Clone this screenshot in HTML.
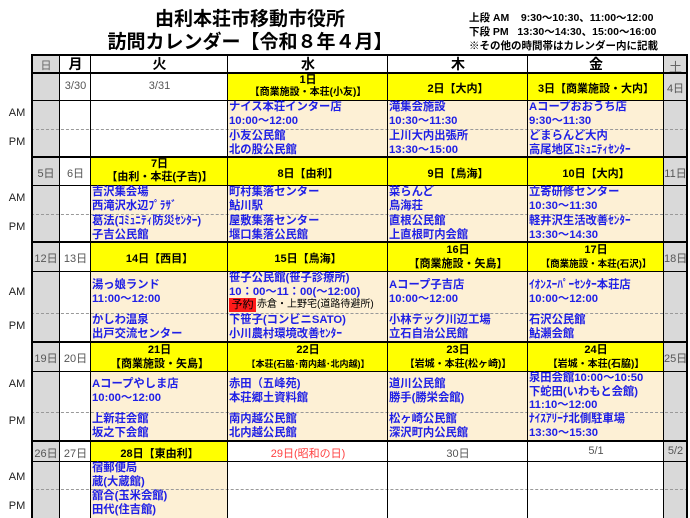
<!DOCTYPE html>
<html><head><meta charset="utf-8"><style>
*{margin:0;padding:0;box-sizing:border-box}
body{width:690px;height:518px;background:#fff;position:relative;overflow:hidden;font-family:"Liberation Sans","Noto Sans CJK JP",sans-serif}
div{position:absolute}
.g{background:#d9d9d9}.y{background:#ffff00}.p{background:#fdf0d5}.w{background:#fff}
.h{height:1px;background:#000}.H{height:2px;background:#000}
.d{height:0;border-top:1px dashed #999}
.v{width:1px;background:#000}.V{width:2px;background:#000}
.t{font-size:11.3px;font-weight:bold;color:#1f1fe6;line-height:13.5px;white-space:nowrap;padding-left:1px;margin-top:1px}
.c{text-align:center;white-space:nowrap;font-weight:bold;color:#000}
.n{font-size:11px;color:#555;text-align:center;white-space:nowrap}
.lab{font-size:11px;color:#222;left:6px;width:22px;text-align:center}
</style></head><body>
<div style="left:95px;top:8px;width:310px;text-align:center;font-size:19px;font-weight:bold;line-height:23px">由利本荘市移動市役所</div>
<div style="left:95px;top:31px;width:310px;text-align:center;font-size:19px;font-weight:bold;line-height:23px">訪問カレンダー【令和８年４月】</div>
<div style="left:469px;top:11px;font-size:10.5px;font-weight:bold;line-height:14px;white-space:pre">上段 AM    9:30～10:30、11:00～12:00
下段 PM   13:30～14:30、15:00～16:00
※その他の時間帯はカレンダー内に記載</div>

<div class="g" style="left:32px;top:55px;width:28px;height:18px"></div>
<div class="g" style="left:664px;top:55px;width:23px;height:18px"></div>
<div class="n" style="left:32px;top:57px;width:28px;color:#666">日</div>
<div class="c" style="left:60px;top:55px;width:31px;font-size:14px;line-height:18px">月</div>
<div class="c" style="left:91px;top:55px;width:137px;font-size:14px;line-height:18px">火</div>
<div class="c" style="left:228px;top:55px;width:160px;font-size:14px;line-height:18px">水</div>
<div class="c" style="left:388px;top:55px;width:140px;font-size:14px;line-height:18px">木</div>
<div class="c" style="left:528px;top:55px;width:136px;font-size:14px;line-height:18px">金</div>
<div class="n" style="left:664px;top:57px;width:23px;color:#666;font-size:13px">土</div>

<div class="g" style="left:32px;top:73px;width:28px;height:445px"></div>
<div class="g" style="left:664px;top:73px;width:23px;height:445px"></div>
<div class="y" style="left:228px;top:73px;width:436px;height:27px"></div>
<div class="p" style="left:228px;top:100px;width:436px;height:57px"></div>
<div class="y" style="left:91px;top:157px;width:573px;height:28px"></div>
<div class="p" style="left:91px;top:185px;width:573px;height:57px"></div>
<div class="y" style="left:91px;top:242px;width:573px;height:29px"></div>
<div class="p" style="left:91px;top:271px;width:573px;height:71px"></div>
<div class="y" style="left:91px;top:342px;width:573px;height:29px"></div>
<div class="p" style="left:91px;top:371px;width:573px;height:70px"></div>
<div class="y" style="left:91px;top:441px;width:137px;height:20px"></div>
<div class="p" style="left:91px;top:461px;width:137px;height:57px"></div>

<div class="H" style="left:31px;top:54px;width:657px"></div>
<div class="H" style="left:31px;top:72px;width:657px"></div>
<div class="h" style="left:31px;top:100px;width:657px"></div>
<div class="d" style="left:31px;top:129px;width:657px"></div>
<div class="H" style="left:31px;top:156px;width:657px"></div>
<div class="h" style="left:31px;top:185px;width:657px"></div>
<div class="d" style="left:31px;top:214px;width:657px"></div>
<div class="H" style="left:31px;top:241px;width:657px"></div>
<div class="h" style="left:31px;top:271px;width:657px"></div>
<div class="d" style="left:31px;top:313px;width:657px"></div>
<div class="H" style="left:31px;top:341px;width:657px"></div>
<div class="h" style="left:31px;top:371px;width:657px"></div>
<div class="d" style="left:31px;top:412px;width:657px"></div>
<div class="H" style="left:31px;top:440px;width:657px"></div>
<div class="h" style="left:31px;top:461px;width:657px"></div>
<div class="d" style="left:31px;top:489px;width:657px"></div>
<div class="V" style="left:31px;top:54px;height:464px"></div>
<div class="v" style="left:59px;top:54px;height:464px"></div>
<div class="v" style="left:90px;top:54px;height:464px"></div>
<div class="v" style="left:227px;top:54px;height:464px"></div>
<div class="v" style="left:387px;top:54px;height:464px"></div>
<div class="v" style="left:527px;top:54px;height:464px"></div>
<div class="v" style="left:663px;top:54px;height:464px"></div>
<div class="V" style="left:686px;top:54px;height:464px"></div>

<div class="lab" style="top:107px">AM</div><div class="lab" style="top:136px">PM</div>
<div class="lab" style="top:192px">AM</div><div class="lab" style="top:221px">PM</div>
<div class="lab" style="top:286px">AM</div><div class="lab" style="top:320px">PM</div>
<div class="lab" style="top:378px">AM</div><div class="lab" style="top:415px">PM</div>
<div class="lab" style="top:471px">AM</div><div class="lab" style="top:500px">PM</div>

<div class="n" style="left:60px;top:80px;width:31px">3/30</div>
<div class="n" style="left:91px;top:80px;width:137px">3/31</div>
<div class="c" style="left:228px;top:74px;width:160px;font-size:11px;line-height:12px">1日<br><span style="font-size:10px">【商業施設・本荘(小友)】</span></div>
<div class="c" style="left:388px;top:80px;width:140px;font-size:11px">2日【大内】</div>
<div class="c" style="left:528px;top:80px;width:136px;font-size:11px">3日【商業施設・大内】</div>
<div class="n" style="left:664px;top:80px;width:23px">4日</div>
<div class="t" style="left:228px;top:100px">ナイス本荘インター店<br>10:00～12:00</div>
<div class="t" style="left:388px;top:100px">滝集会施設<br>10:30～11:30</div>
<div class="t" style="left:528px;top:100px">Aコープおおうち店<br>9:30～11:30</div>
<div class="t" style="left:228px;top:129px">小友公民館<br>北の股公民館</div>
<div class="t" style="left:388px;top:129px">上川大内出張所<br>13:30～15:00</div>
<div class="t" style="left:528px;top:129px">どまらんど大内<br>高尾地区ｺﾐｭﾆﾃｨｾﾝﾀｰ</div>

<div class="n" style="left:32px;top:165px;width:28px">5日</div>
<div class="n" style="left:60px;top:165px;width:31px">6日</div>
<div class="c" style="left:91px;top:158px;width:137px;font-size:11px;line-height:13px">7日<br>【由利・本荘(子吉)】</div>
<div class="c" style="left:228px;top:165px;width:160px;font-size:11px">8日【由利】</div>
<div class="c" style="left:388px;top:165px;width:140px;font-size:11px">9日【鳥海】</div>
<div class="c" style="left:528px;top:165px;width:136px;font-size:11px">10日【大内】</div>
<div class="n" style="left:664px;top:165px;width:23px">11日</div>
<div class="t" style="left:91px;top:185px">吉沢集会場<br>西滝沢水辺ﾌﾟﾗｻﾞ</div>
<div class="t" style="left:228px;top:185px">町村集落センター<br>鮎川駅</div>
<div class="t" style="left:388px;top:185px">菜らんど<br>鳥海荘</div>
<div class="t" style="left:528px;top:185px">立寄研修センター<br>10:30～11:30</div>
<div class="t" style="left:91px;top:214px">葛法(ｺﾐｭﾆﾃｨ防災ｾﾝﾀｰ)<br>子吉公民館</div>
<div class="t" style="left:228px;top:214px">屋敷集落センター<br>堰口集落公民館</div>
<div class="t" style="left:388px;top:214px">直根公民館<br>上直根町内会館</div>
<div class="t" style="left:528px;top:214px">軽井沢生活改善ｾﾝﾀｰ<br>13:30～14:30</div>

<div class="n" style="left:32px;top:250px;width:28px">12日</div>
<div class="n" style="left:60px;top:250px;width:31px">13日</div>
<div class="c" style="left:91px;top:250px;width:137px;font-size:11px">14日【西目】</div>
<div class="c" style="left:228px;top:250px;width:160px;font-size:11px">15日【鳥海】</div>
<div class="c" style="left:388px;top:243px;width:140px;font-size:11px;line-height:14px">16日<br>【商業施設・矢島】</div>
<div class="c" style="left:528px;top:243px;width:136px;font-size:11px;line-height:14px">17日<br><span style="font-size:9.5px">【商業施設・本荘(石沢)】</span></div>
<div class="n" style="left:664px;top:250px;width:23px">18日</div>
<div class="t" style="left:91px;top:278px">湯っ娘ランド<br>11:00～12:00</div>
<div class="t" style="left:228px;top:271px">笹子公民館(笹子診療所)<br>10：00～11：00(～12:00)</div>
<div style="left:229px;top:298px;width:27px;height:14px;background:#ff1a1a;font-size:11px;line-height:14px;text-align:center">予約</div>
<div style="left:257px;top:298px;font-size:10px;line-height:14px;white-space:nowrap">赤倉・上野宅(道路待避所)</div>
<div class="t" style="left:388px;top:278px">Aコープ子吉店<br>10:00～12:00</div>
<div class="t" style="left:528px;top:278px">ｲｵﾝｽｰﾊﾟｰｾﾝﾀｰ本荘店<br>10:00～12:00</div>
<div class="t" style="left:91px;top:313px">かしわ温泉<br>出戸交流センター</div>
<div class="t" style="left:228px;top:313px">下笹子(コンビニSATO)<br>小川農村環境改善ｾﾝﾀｰ</div>
<div class="t" style="left:388px;top:313px">小林テック川辺工場<br>立石自治公民館</div>
<div class="t" style="left:528px;top:313px">石沢公民館<br>鮎瀬会館</div>

<div class="n" style="left:32px;top:350px;width:28px">19日</div>
<div class="n" style="left:60px;top:350px;width:31px">20日</div>
<div class="c" style="left:91px;top:343px;width:137px;font-size:11px;line-height:14px">21日<br>【商業施設・矢島】</div>
<div class="c" style="left:228px;top:343px;width:160px;font-size:11px;line-height:14px">22日<br><span style="font-size:9px">【本荘(石脇･南内越･北内越)】</span></div>
<div class="c" style="left:388px;top:343px;width:140px;font-size:11px;line-height:14px">23日<br><span style="font-size:10px">【岩城・本荘(松ヶ崎)】</span></div>
<div class="c" style="left:528px;top:343px;width:136px;font-size:11px;line-height:14px">24日<br><span style="font-size:10px">【岩城・本荘(石脇)】</span></div>
<div class="n" style="left:664px;top:350px;width:23px">25日</div>
<div class="t" style="left:91px;top:377px">Aコープやしま店<br>10:00～12:00</div>
<div class="t" style="left:228px;top:377px">赤田（五峰苑)<br>本荘郷土資料館</div>
<div class="t" style="left:388px;top:377px">道川公民館<br>勝手(勝栄会館)</div>
<div class="t" style="left:528px;top:371px">泉田会館10:00～10:50<br>下蛇田(いわもと会館)<br>11:10～12:00</div>
<div class="t" style="left:91px;top:412px">上新荘会館<br>坂之下会館</div>
<div class="t" style="left:228px;top:412px">南内越公民館<br>北内越公民館</div>
<div class="t" style="left:388px;top:412px">松ヶ崎公民館<br>深沢町内公民館</div>
<div class="t" style="left:528px;top:412px">ﾅｲｽｱﾘｰﾅ北側駐車場<br>13:30～15:30</div>

<div class="n" style="left:32px;top:445px;width:28px">26日</div>
<div class="n" style="left:60px;top:445px;width:31px">27日</div>
<div class="c" style="left:91px;top:445px;width:137px;font-size:11px">28日【東由利】</div>
<div class="n" style="left:228px;top:445px;width:160px;color:#ff4040">29日(昭和の日)</div>
<div class="n" style="left:388px;top:445px;width:140px">30日</div>
<div class="n" style="left:528px;top:445px;width:136px">5/1</div>
<div class="n" style="left:664px;top:445px;width:23px">5/2</div>
<div class="t" style="left:91px;top:461px">宿郵便局<br>蔵(大蔵館)</div>
<div class="t" style="left:91px;top:489px">舘合(玉米会館)<br>田代(住吉館)</div>
</body></html>
